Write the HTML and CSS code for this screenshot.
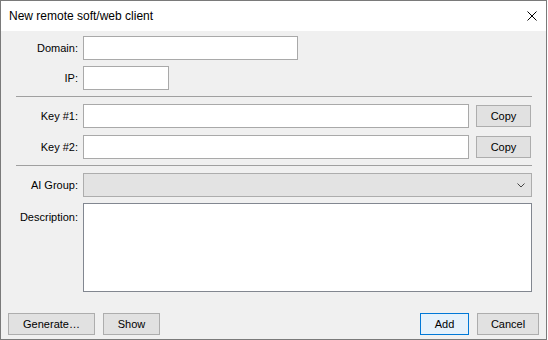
FILE: index.html
```html
<!DOCTYPE html>
<html>
<head>
<meta charset="utf-8">
<link rel="stylesheet" href="styles.css">
</head>
<body>
<div class="window">
  <div class="titlebar">
    <span class="title">New remote soft/web client</span>
    <svg class="close" width="10" height="10" viewBox="0 0 10 10"><path d="M0.5 0.5 L9.5 9.5 M9.5 0.5 L0.5 9.5" stroke="#000" stroke-width="1" fill="none"/></svg>
  </div>
  <div class="form">
    <div class="row">
      <span class="lbl">Domain:</span>
      <div class="tb domain"></div>
    </div>
    <div class="row gap6">
      <span class="lbl">IP:</span>
      <div class="tb ip"></div>
    </div>
    <div class="sep"></div>
    <div class="row">
      <span class="lbl">Key #1:</span>
      <div class="tb key"></div>
      <div class="btn copy">Copy</div>
    </div>
    <div class="row gap7">
      <span class="lbl">Key #2:</span>
      <div class="tb key"></div>
      <div class="btn copy">Copy</div>
    </div>
    <div class="sep"></div>
    <div class="row">
      <span class="lbl">AI Group:</span>
      <div class="combo">
        <svg class="chev" width="8" height="5" viewBox="0 0 8 5"><path d="M0.5 0.5 L4 4 L7.5 0.5" stroke="#444" stroke-width="1" fill="none"/></svg>
      </div>
    </div>
    <div class="row desc gap6">
      <span class="lbl lbl-top">Description:</span>
      <div class="tb area"></div>
    </div>
  </div>
  <div class="footer">
    <div class="btn gen">Generate…</div>
    <div class="btn show">Show</div>
    <div class="spacer"></div>
    <div class="btn add">Add</div>
    <div class="btn cancel">Cancel</div>
  </div>
</div>
</body>
</html>
```

FILE: styles.css
```css
* { box-sizing: border-box; }
body {
  margin: 0;
  background: #ffffff;
  font-family: "Liberation Sans", Arial, sans-serif;
  font-size: 11px;
  color: #000;
}
.window {
  width: 547px;
  height: 340px;
  border: 1px solid #7a7a7a;
  background: #f0f0f0;
  display: flex;
  flex-direction: column;
}
.titlebar {
  height: 30px;
  background: #ffffff;
  display: flex;
  align-items: center;
  padding-left: 8px;
  flex: none;
}
.title {
  font-family: "Liberation Sans", Arial, sans-serif;
  font-size: 12px;
}
.close {
  margin-left: auto;
  margin-right: 9px;
  display: block;
}
.form {
  padding: 5px 14px 0 15px;
  display: flex;
  flex-direction: column;
}
.row {
  display: flex;
  align-items: center;
  height: 24px;
}
.gap6 { margin-top: 6px; }
.gap7 { margin-top: 7px; }
.lbl {
  width: 62px;
  flex: none;
  text-align: right;
  white-space: nowrap;
  line-height: 13px;
}
.tb {
  margin-left: 5px;
  height: 24px;
  background: #fff;
  border: 1px solid #a9a9a9;
  flex: none;
}
.domain { width: 215px; }
.ip { width: 86px; }
.key { width: 386px; }
.sep {
  height: 1px;
  background: #a0a0a0;
  margin: 6px 0 7px 0;
}
.btn {
  height: 22px;
  background: #e1e1e1;
  border: 1px solid #adadad;
  display: flex;
  align-items: center;
  justify-content: center;
  flex: none;
  white-space: nowrap;
}
.copy {
  width: 55px;
  margin-left: 7px;
}
.combo {
  margin-left: 5px;
  width: 449px;
  height: 24px;
  background: #e3e3e3;
  border: 1px solid #adadad;
  display: flex;
  align-items: center;
  justify-content: flex-end;
  padding-right: 6px;
}
.chev { display: block; }
.desc {
  height: 89px;
  align-items: flex-start;
}
.lbl-top { padding-top: 8px; }
.area {
  width: 449px;
  height: 89px;
  border-color: #828790;
}
.footer {
  margin-top: auto;
  padding: 0 7px 4px 7px;
  display: flex;
  align-items: center;
}
.spacer { flex: 1; }
.gen { width: 87px; }
.show { width: 57px; margin-left: 8px; }
.add {
  width: 49px;
  background: #e5f1fb;
  border-color: #0078d7;
}
.cancel { width: 62px; margin-left: 8px; }
```
